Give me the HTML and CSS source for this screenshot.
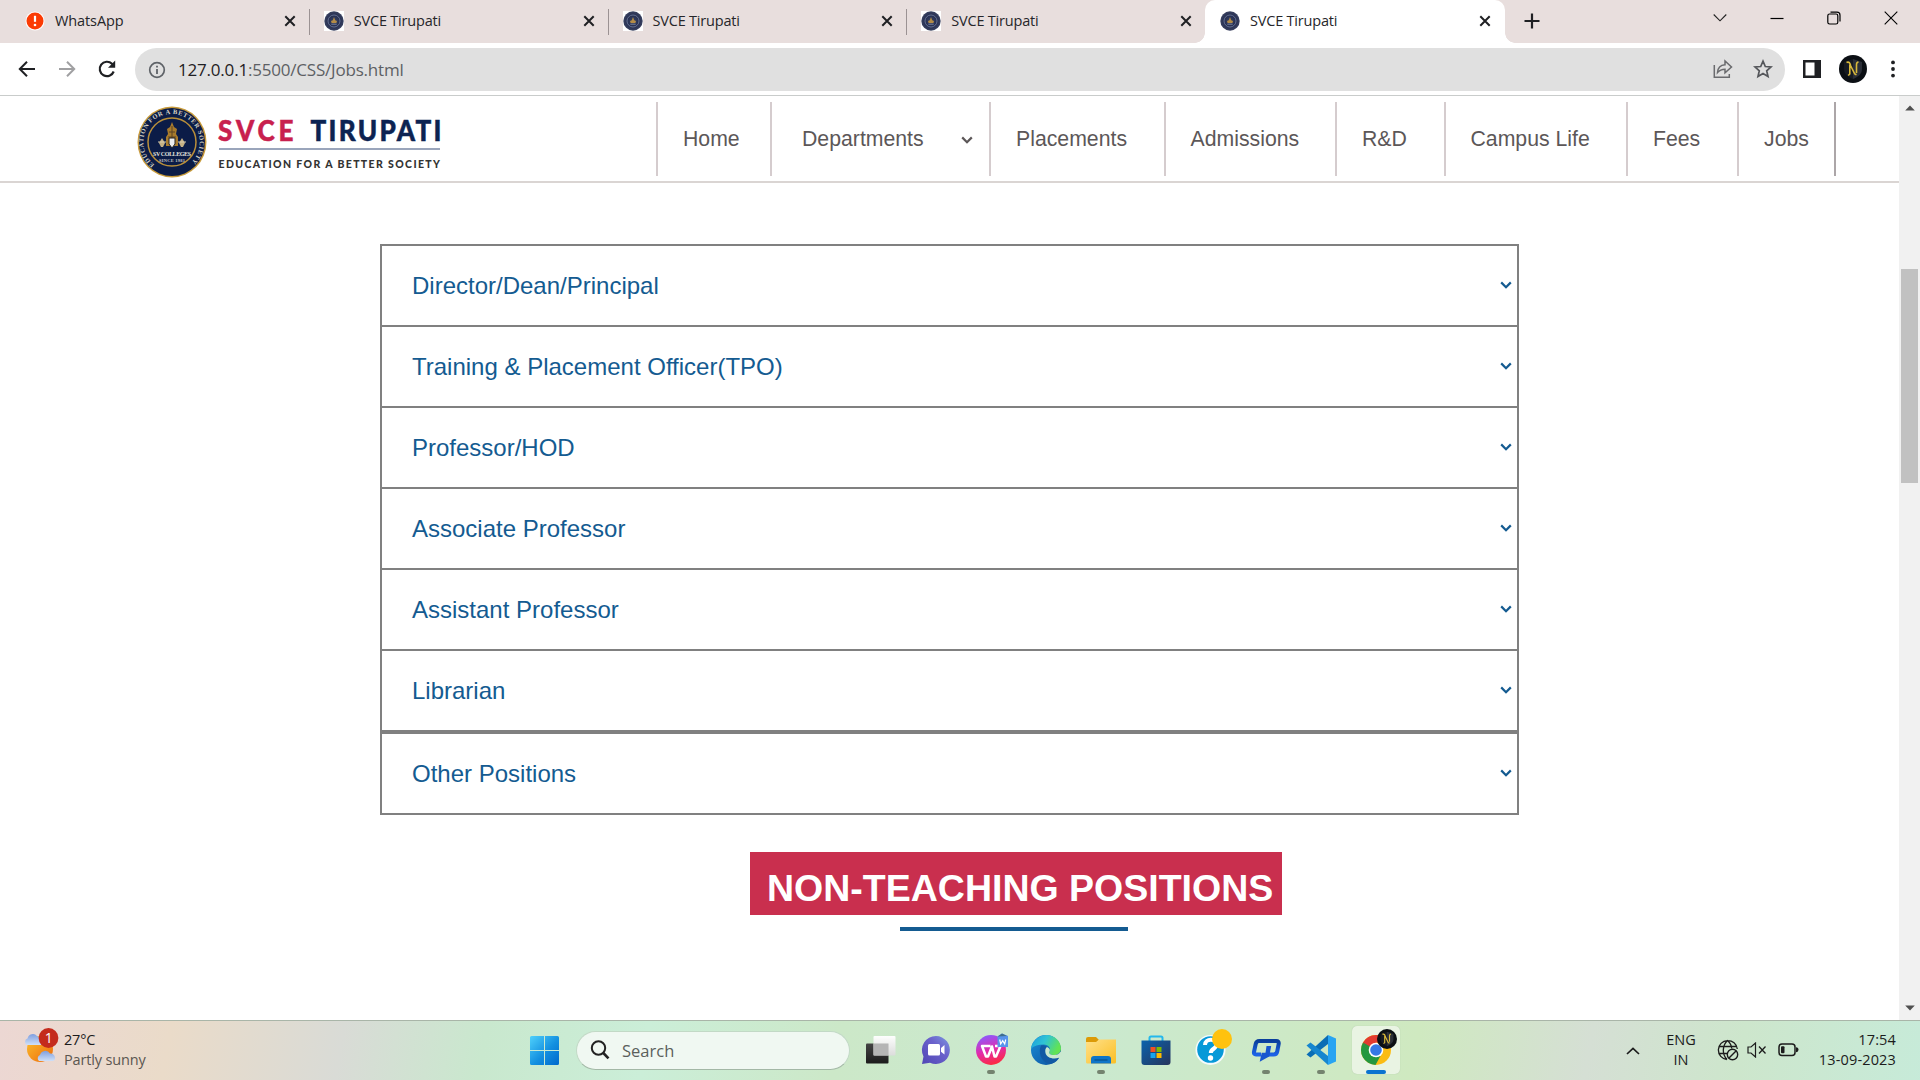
FILE: index.html
```html
<!DOCTYPE html>
<html lang="en">
<head>
<meta charset="utf-8">
<title>SVCE Tirupati</title>
<link rel="stylesheet" href="styles.css">
</head>
<body>
<svg class="defs" width="0" height="0" aria-hidden="true">
  <defs>
    <radialGradient id="fav"><stop offset="0" stop-color="#3a4360"/><stop offset=".6" stop-color="#252e52"/><stop offset="1" stop-color="#39415f"/></radialGradient>
    <linearGradient id="win" x1="0" y1="0" x2="1" y2="1"><stop offset="0" stop-color="#4fd0fb"/><stop offset=".55" stop-color="#1390e0"/><stop offset="1" stop-color="#0069cc"/></linearGradient>
    <linearGradient id="sun" x1="0" y1="0" x2="1" y2="1"><stop offset="0" stop-color="#fbc02d"/><stop offset="1" stop-color="#ee6a0c"/></linearGradient>
    <linearGradient id="cloud" x1="0" y1="0" x2="0" y2="1"><stop offset="0" stop-color="#7f9fe0"/><stop offset="1" stop-color="#cfe0f8"/></linearGradient>
    <linearGradient id="tvd" x1="0" y1="0" x2="0" y2="1"><stop offset="0" stop-color="#444"/><stop offset="1" stop-color="#1c1c1c"/></linearGradient>
    <linearGradient id="tvl" x1="0" y1="0" x2="0" y2="1"><stop offset="0" stop-color="#fff"/><stop offset="1" stop-color="#dcdcdc"/></linearGradient>
    <linearGradient id="chat" x1="0" y1="1" x2="1" y2="0"><stop offset="0" stop-color="#5046b5"/><stop offset=".6" stop-color="#6b62cc"/><stop offset="1" stop-color="#7d9ae0"/></linearGradient>
    <linearGradient id="wps" x1=".3" y1="0" x2=".6" y2="1"><stop offset="0" stop-color="#8a5cff"/><stop offset=".5" stop-color="#e02cae"/><stop offset="1" stop-color="#ff2a3c"/></linearGradient>
    <linearGradient id="edgeTop" x1="0" y1="0" x2="1" y2=".4"><stop offset="0" stop-color="#1b9ade"/><stop offset=".5" stop-color="#2fc3d5"/><stop offset="1" stop-color="#62e354"/></linearGradient>
    <linearGradient id="edgeLow" x1="0" y1="0" x2="1" y2="1"><stop offset="0" stop-color="#1a8fd8"/><stop offset="1" stop-color="#0c4f9c"/></linearGradient>
    <linearGradient id="folder" x1="0" y1="0" x2="1" y2="1"><stop offset="0" stop-color="#ffe08a"/><stop offset="1" stop-color="#fbbf24"/></linearGradient>
    <linearGradient id="store" x1="0" y1="0" x2="1" y2="1"><stop offset="0" stop-color="#0a63ad"/><stop offset="1" stop-color="#27355c"/></linearGradient>
    <linearGradient id="qb" x1="0" y1="0" x2="0" y2="1"><stop offset="0" stop-color="#0a3f9c"/><stop offset="1" stop-color="#1c62e6"/></linearGradient>
    <symbol id="crest" viewBox="0 0 20 20">
      <circle cx="10" cy="10" r="9.7" fill="url(#fav)"/>
      <circle cx="10" cy="10" r="6" fill="none" stroke="#7480a0" stroke-width=".8"/>
      <path d="M10 6l1.200 3.200L13 10l-.6 2H7.600L7 10l1.800-.8z" fill="#b48c46"/>
      <path d="M7.300 13.200h5.400" stroke="#9aa3bb" stroke-width=".7"/>
    </symbol>
    <symbol id="x" viewBox="0 0 12 12"><path d="M1.300 1.300l9.400 9.400M10.700 1.300l-9.400 9.400" stroke="#1f2023" stroke-width="2" fill="none"/></symbol>
    <symbol id="chev" viewBox="0 0 12 8"><path d="M1.200 1.400L6 6.200l4.800-4.800" stroke="currentColor" stroke-width="2.200" fill="none"/></symbol>
    <symbol id="avatar" viewBox="0 0 28 28">
      <circle cx="14" cy="14" r="14" fill="#0b0f14"/>
      <path d="M14 4l9 3v7c0 5-4 8-9 10z" fill="#2b2f38"/><path d="M14 4L5 7v7c0 5 4 8 9 10z" fill="#171b22"/>
      <path d="M7.500 7.500c2.500-1.200 3.500.5 4.300 3.500l3.200 6.500c.8 1.800 1.500 2.200 2.500 1.700M10.800 9.500v9.500l-1.600 1.500M17.500 18V9.500c0-1.500.8-2.300 2-2.500" fill="none" stroke="#d9b93a" stroke-width="1.600"/>
    </symbol>
  </defs>
</svg>

<header class="tabstrip">
  <div class="tab first">
    <svg class="fav warn" viewBox="0 0 20 20"><circle cx="10" cy="10" r="9.500" fill="#fff"/><circle cx="10" cy="10" r="8.500" fill="#fb3b04"/><path d="M10 4.800v6" stroke="#fff" stroke-width="2.200"/><circle cx="10" cy="14" r="1.300" fill="#fff"/></svg>
    <span class="tab-title wa">WhatsApp</span><svg class="close"><use href="#x"/></svg>
  </div>
  <div class="tab"><span class="fav plate"><svg><use href="#crest"/></svg></span><span class="tab-title">SVCE Tirupati</span><svg class="close"><use href="#x"/></svg></div>
  <div class="tab"><span class="fav plate"><svg><use href="#crest"/></svg></span><span class="tab-title">SVCE Tirupati</span><svg class="close"><use href="#x"/></svg></div>
  <div class="tab last"><span class="fav plate"><svg><use href="#crest"/></svg></span><span class="tab-title">SVCE Tirupati</span><svg class="close"><use href="#x"/></svg></div>
  <div class="tab active"><span class="fav"><svg><use href="#crest"/></svg></span><span class="tab-title">SVCE Tirupati</span><svg class="close"><use href="#x"/></svg></div>
  <svg class="plus" viewBox="0 0 16 16"><path d="M8 .5v15M.5 8h15" stroke="#1f2023" stroke-width="2.200"/></svg>
  <div class="window-buttons">
    <svg viewBox="0 0 14 14"><path d="M.7 3.500L7 9.800l6.300-6.300" fill="none" stroke="#222" stroke-width="1.100"/></svg>
    <svg viewBox="0 0 14 14"><path d="M.5 7.500h13" stroke="#000" stroke-width="1.200"/></svg>
    <svg viewBox="0 0 14 14"><rect x=".8" y="3" width="10" height="10" rx="1.800" fill="none" stroke="#000" stroke-width="1.200"/><path d="M3.500 1.200h6.500a3 3 0 0 1 3 3v6.300" fill="none" stroke="#000" stroke-width="1.200"/></svg>
    <svg viewBox="0 0 14 14"><path d="M.7.7l12.600 12.600M13.300.7L.7 13.300" stroke="#000" stroke-width="1.100"/></svg>
  </div>
</header>

<div class="toolbar">
  <svg class="nav-ic" viewBox="0 0 20 20"><path d="M18 10H3.200M10 2.800L2.800 10l7.200 7.200" fill="none" stroke="#1f2023" stroke-width="2"/></svg>
  <svg class="nav-ic" viewBox="0 0 20 20"><path d="M2 10h14.800M10 2.800l7.200 7.200-7.200 7.200" fill="none" stroke="#a0a0a2" stroke-width="2"/></svg>
  <svg class="nav-ic" viewBox="0 0 20 20"><path d="M16.700 12.500A7.200 7.200 0 1 1 15 4.800l1.500 1.500" fill="none" stroke="#1f2023" stroke-width="2.200"/><path d="M18.200 1.500v7.200H11z" fill="#1f2023"/></svg>
  <div class="address">
    <svg class="info" viewBox="0 0 18 18"><circle cx="9" cy="9" r="7.300" fill="none" stroke="#5f6368" stroke-width="1.700"/><path d="M9 8v5M9 4.800v1.800" stroke="#5f6368" stroke-width="1.800"/></svg>
    <span class="url"><b>127.0.0.1</b>:5500/CSS/Jobs.html</span>
    <svg class="share" viewBox="0 0 20 20"><path d="M1.300 6v12.300h15V15" fill="none" stroke="#6a6b6e" stroke-width="1.500"/><path d="M4.500 13.500c.3-4.500 3-7.500 7.500-7.800V2l6.500 6-6.500 5.800v-3.600c-3.200 0-5.500 1-7.500 3.300z" fill="none" stroke="#6a6b6e" stroke-width="1.500"/></svg>
    <svg class="star" viewBox="0 0 20 20"><path d="M10 2.200l2.300 5.300 5.700.5-4.300 3.800 1.300 5.600-5-3-5 3 1.300-5.600L2 8l5.700-.5z" fill="none" stroke="#55575b" stroke-width="1.700"/></svg>
  </div>
  <svg class="panel" viewBox="0 0 18 18"><path d="M0 0h18v18H0zM2.500 2.500v13h9v-13z" fill="#1f2023" fill-rule="evenodd"/></svg>
  <svg class="avatar"><use href="#avatar"/></svg>
  <svg class="dots" viewBox="0 0 4 18"><circle cx="2" cy="2.400" r="1.900"/><circle cx="2" cy="9" r="1.900"/><circle cx="2" cy="15.600" r="1.900"/></svg>
</div>

<div class="viewport">
  <main class="page">
    <div class="site-header">
      <svg class="logo" viewBox="0 0 304 72" role="img">
        <defs><path id="ring" d="M17.500 58.500A28.200 28.200 0 1 1 54.500 56"/></defs>
        <ellipse cx="35" cy="36" rx="34.500" ry="35.500" fill="#c79a3a"/>
        <ellipse cx="35" cy="36" rx="33" ry="34" fill="#0b1c47"/>
        <circle cx="35" cy="36" r="24" fill="#0b1c47" stroke="#b98f3a" stroke-width="1.500"/>
        <text class="ring-text"><textPath href="#ring" textLength="136">EDUCATION FOR A BETTER SOCIETY</textPath></text>
        <path d="M35 16l2 5 3 2-1 5 2 3v9H29v-9l2-3-1-5 3-2z" fill="#a87b2c"/>
        <path d="M35 20v18M32 26h6M31 31h8" stroke="#5b4424" stroke-width="1"/>
        <path d="M22 37l3-5 3 5-2 4h-2zM42 37l3-5 3 5-2 4h-2z" fill="#c5b184"/>
        <path d="M21 36h8M41 36h8" stroke="#d9cdb0" stroke-width="1"/>
        <path d="M32 32h6v6l-3 4-3-4z" fill="#eee" stroke="#222" stroke-width="1"/>
        <text class="crest-text" x="35" y="49.500" textLength="38">SV COLLEGES</text>
        <text class="crest-sub" x="35" y="56" textLength="26">SINCE 1981</text>
        <text class="brand red" transform="translate(81 34.500) scale(.9 1)" textLength="84">SVCE</text>
        <text class="brand blue" transform="translate(173.500 34.500) scale(.9 1)" textLength="145.500">TIRUPATI</text>
        <rect x="82" y="42" width="221" height="2" fill="#9aa5bb"/>
        <text class="tagline" x="81.500" y="61.500" textLength="221.500">EDUCATION FOR A BETTER SOCIETY</text>
      </svg>
      <nav class="menu">
        <a class="home">Home</a>
        <a class="dept">Departments<svg><use href="#chev"/></svg></a>
        <a class="plac">Placements</a>
        <a class="admi">Admissions</a>
        <a class="rnd">R&amp;D</a>
        <a class="camp">Campus Life</a>
        <a class="fees">Fees</a>
        <a class="jobs">Jobs</a>
      </nav>
    </div>
    <section class="accordion">
      <div class="row">Director/Dean/Principal<svg><use href="#chev"/></svg></div>
      <div class="row">Training &amp; Placement Officer(TPO)<svg><use href="#chev"/></svg></div>
      <div class="row">Professor/HOD<svg><use href="#chev"/></svg></div>
      <div class="row">Associate Professor<svg><use href="#chev"/></svg></div>
      <div class="row">Assistant Professor<svg><use href="#chev"/></svg></div>
      <div class="row">Librarian<svg><use href="#chev"/></svg></div>
      <div class="row other">Other Positions<svg><use href="#chev"/></svg></div>
    </section>
    <h1 class="banner">NON-TEACHING POSITIONS</h1>
    <div class="rule"></div>
  </main>
  <div class="scrollbar">
    <svg viewBox="0 0 10 6"><path d="M5 .5L9.800 5.500H.2z"/></svg>
    <div class="thumb"></div>
    <svg class="down" viewBox="0 0 10 6"><path d="M5 5.500L9.800.5H.2z"/></svg>
  </div>
</div>

<footer class="taskbar">
  <div class="weather">
    <svg viewBox="0 0 36 36">
      <circle cx="16" cy="21" r="13" fill="url(#sun)"/>
      <path d="M3 17a3.500 3.500 0 0 1 .5-6.500A5.500 5.500 0 0 1 13 8c3 1 5 4 4 9z" fill="url(#cloud)"/>
      <path d="M15 33a3.500 3.500 0 0 1 1-6 5.500 5.500 0 0 1 10-1.500c3 0 5.500 2 5 5.500-.3 1.300-1.200 2-2.500 2z" fill="url(#cloud)"/>
      <circle cx="24.500" cy="10" r="9.900" fill="#c42b1c"/>
      <text x="24.700" y="15" class="badge-num">1</text>
    </svg>
    <div class="two-line"><span class="temp">27°C</span><span class="cond">Partly sunny</span></div>
  </div>
  <div class="apps">
    <svg class="start" viewBox="0 0 29 29"><path d="M1.500 0H14v14H0V1.500Q0 0 1.500 0zM15 0h12.500Q29 0 29 1.500V14H15zM0 15h14v14H1.500Q0 29 0 27.500zM15 15h14v12.500q0 1.500-1.500 1.500H15z" fill="url(#win)"/></svg>
    <div class="search"><svg viewBox="0 0 20 20"><circle cx="8.500" cy="8" r="6.700" fill="none" stroke="#222" stroke-width="2"/><path d="M13.300 13l5.200 5.300" stroke="#222" stroke-width="2.600"/></svg><span>Search</span></div>
    <div class="app"><svg viewBox="0 0 32 32"><rect x="1" y="9.500" width="22.500" height="20" rx="1" fill="url(#tvd)"/><rect x="8.500" y="2" width="22" height="19.500" rx="1" fill="url(#tvl)" opacity=".97"/><path d="M8.500 9.500h15v12h-15z" fill="#b5b5b5"/></svg></div>
    <div class="app"><svg viewBox="0 0 32 32"><path d="M16 2a14 14 0 1 1-6 26.700L2 30l1.500-7.500A14 14 0 0 1 16 2z" fill="url(#chat)"/><rect x="8" y="10" width="12" height="11.500" rx="1.500" fill="#fff"/><path d="M21 14l3.500-3v9.500L21 17.800z" fill="#fff"/></svg></div>
    <div class="app run"><svg viewBox="0 0 32 32"><circle cx="16" cy="16" r="15" fill="url(#wps)"/><path d="M15.500 12H7l4 10.500h2L17 12.500l2.500 10h1.500L25.500 12H20" fill="none" stroke="#fff" stroke-width="2.500" stroke-linejoin="round"/><path d="M22.500 2.500L27-.5 33 2v11H22.500z" fill="#5794ec"/><path d="M22.500 2.500L27-.5l5 2.500z" fill="#3f6f8c"/><path d="M24.700 5.500l1 4.500 2-3.300 2 3.300 1-4.500" fill="none" stroke="#fff" stroke-width="1.200"/></svg></div>
    <div class="app"><svg viewBox="0 0 32 32"><circle cx="16" cy="16" r="15" fill="url(#edgeLow)"/><path d="M1 14.500C2.500 6.500 9 1 16.500 1 25 1 31 7.500 31 14.500c0 4-3 6.500-7 6.500-3.500 0-5.500-1.500-4.500-3.500 1.500-3-.5-7-6-7-5 0-9.500 1.500-12.500 4z" fill="url(#edgeTop)"/><path d="M11 11.500c-3 6-.5 17 9 18.500 5-1 8-4 9-6.300-5 2.300-12 .3-13.500-4.700-.8-3 0-5 1.500-6-1.500-1.600-4-2-6-1.500z" fill="#1259a4"/><path d="M19.500 17.500c-1 2 1 3.500 4.500 3.500 3.200 0 5.500-1 6.500-3.500l2 4-3.500 2.200c-6 2-12.500 0-13.500-4.700-.6-3 0-5 1.500-6 2.500 1 3.500 3 2.500 4.500z" fill="#cbe8ce"/></svg></div>
    <div class="app run"><svg viewBox="0 0 32 32"><path d="M1 5q0-2 2-2h8l3 3-3 3H1z" fill="#dc9a07"/><path d="M1 8h10l3-2.500h17V28q0 1.500-1.500 1.500h-27Q1 29.500 1 28z" fill="url(#folder)"/><path d="M6 29.500V25q0-3 3-3h14q3 0 3 3v4.500z" fill="#0f75c8"/><path d="M9.500 26h13" stroke="#07528f" stroke-width="1.300"/></svg></div>
    <div class="app"><svg viewBox="0 0 32 32"><path d="M9.500 7V4q0-1.500 1.500-1.500h10q1.500 0 1.500 1.500v3" fill="none" stroke="#24b8ec" stroke-width="2"/><path d="M1.500 6.500h29V28q0 3-3 3h-23q-3 0-3-3z" fill="url(#store)"/><path d="M10.500 13h5v5h-5z" fill="#f25022"/><path d="M16.500 13h5v5h-5z" fill="#7fba00"/><path d="M10.500 19h5v5h-5z" fill="#17a4ee"/><path d="M16.500 19h5v5h-5z" fill="#ffb900"/></svg></div>
    <div class="app"><svg viewBox="0 0 32 32"><circle cx="15.500" cy="16" r="15" fill="#f5fbfd"/><circle cx="15.500" cy="15.500" r="13.300" fill="#0699d8"/><path d="M10 11c0-7 11.500-7 11.500-.5 0 4.500-5.700 4-5.700 8.500" fill="none" stroke="#fff" stroke-width="4"/><circle cx="15.500" cy="24" r="2.700" fill="#fff"/><circle cx="27" cy="5" r="10" fill="#ffc20e"/></svg></div>
    <div class="app run"><svg viewBox="0 0 32 32"><path d="M11 20.500H6q-2.500 0-2-2.500l1.700-8q.7-3 3.500-3h17q3 0 2.500 3l-1.500 7.500q-.6 3-3.600 3h-5.500" fill="none" stroke="url(#qb)" stroke-width="4"/><path d="M16.500 12h4.700l-2 10.500-9.500 5.300 2-9h3.800z" fill="#1857cf"/></svg></div>
    <div class="app run"><svg viewBox="0 0 32 32"><path d="M23 1L31 4.500v23L23 31z" fill="#28a4f2"/><path d="M23 1v9L5.500 23.500 1.500 20.500z" fill="#0a6db5"/><path d="M23 31v-9L5.500 8.500l-4 3z" fill="#1686cf"/></svg></div>
    <div class="app current"><svg viewBox="0 0 32 32"><circle cx="16" cy="16" r="15" fill="#fbbc14"/><path d="M3 8.500A15 15 0 0 0 15.500 31l6-11L16 16z" fill="#23973f"/><path d="M3 8.500A15 15 0 0 1 29 8.500H16L9.500 19z" fill="#e23b30"/><path d="M3 8.500L9.500 20 16 16z" fill="#23973f"/><circle cx="16" cy="16" r="7.300" fill="#fff"/><circle cx="16" cy="16" r="5.800" fill="#3478e5"/></svg><svg class="mini"><use href="#avatar"/></svg></div>
  </div>
  <div class="tray">
    <svg class="caret" viewBox="0 0 14 8"><path d="M1 7l6-5.700L13 7" fill="none" stroke="#1c1c1c" stroke-width="1.700"/></svg>
    <div class="two-line lang"><span>ENG</span><span class="in">IN</span></div>
    <svg class="globe" viewBox="0 0 22 22"><path d="M10 20.500A9.500 9.500 0 1 1 20.300 10M10 20.500c-5-5-5-14 .5-19 2.800 2.500 4 5 4.200 8M2 7.500h17M2 14.500h8" fill="none" stroke="#1c1c1c" stroke-width="1.300"/><circle cx="15.500" cy="15.500" r="5.200" fill="none" stroke="#1c1c1c" stroke-width="1.400"/><path d="M12 19l7-7" stroke="#1c1c1c" stroke-width="1.400"/></svg>
    <svg class="speaker" viewBox="0 0 20 16"><path d="M1 5h3l4.500-4v14L4 11H1z" fill="none" stroke="#1c1c1c" stroke-width="1.200"/><path d="M12 4.500l6.500 7M18.500 4.500l-6.500 7" stroke="#1c1c1c" stroke-width="1.300"/></svg>
    <svg class="battery" viewBox="0 0 21 14"><rect x="1" y="1" width="16" height="11.500" rx="3" fill="none" stroke="#1c1c1c" stroke-width="1.500"/><rect x="3" y="3.300" width="3.500" height="7" rx="1" fill="#1c1c1c"/><path d="M18 4.300q2.500 0 2.500 2.500T18 9.200z" fill="#1c1c1c"/></svg>
    <div class="two-line clock"><span>17:54</span><span>13-09-2023</span></div>
  </div>
</footer>
</body>
</html>
```

FILE: styles.css
```css
* { box-sizing: border-box; }
body {
  margin: 0;
  width: 1920px;
  height: 1080px;
  overflow: hidden;
  display: flex;
  flex-direction: column;
  background: #fff;
  font-family: "Open Sans", "Noto Sans", sans-serif;
}
svg { display: block; flex: none; }
.defs { position: absolute; }

/* tab strip */
.tabstrip {
  height: 43px;
  display: flex;
  align-items: center;
  background: #e8dedd;
  padding-left: 11px;
}
.tab {
  flex: none;
  width: 298.75px;
  height: 26px;
  display: flex;
  align-items: center;
  padding-left: 14px;
  border-right: 1px solid #9b9293;
}
.tab.last { border-right-color: transparent; }
.fav { width: 20px; height: 20px; margin: -1px 10px 0 0; flex: none; }
.fav svg { width: 20px; height: 20px; }
.plate { background: #fff; }
.tab-title { font-size: 14.5px; line-height: 20px; color: #26262a; letter-spacing: -.2px; flex: 1; padding-bottom: 2px; }
.tab-title.wa { letter-spacing: -.1px; }
.close { width: 12px; height: 12px; margin: -1px 13px 0 0; }
.tab.active {
  height: 43px;
  width: 300px;
  margin-left: -1px;
  padding-left: 15px;
  background: #fff;
  border: 0;
  border-radius: 10px 10px 0 0;
  position: relative;
}
.tab.active .close { margin-right: 14px; }
.tab.active::before, .tab.active::after {
  content: "";
  position: absolute;
  bottom: 0;
  width: 10px;
  height: 10px;
}
.tab.active::before { left: -10px; background: radial-gradient(circle at 0 0, transparent 9.5px, #fff 10px); }
.tab.active::after { right: -10px; background: radial-gradient(circle at 100% 0, transparent 9.5px, #fff 10px); }
.plus { width: 16px; height: 16px; margin: -1px 0 0 19px; }
.window-buttons { margin: 0 22px 7px auto; display: flex; gap: 43px; }
.window-buttons svg { width: 14px; height: 14px; }

/* toolbar */
.toolbar {
  height: 53px;
  display: flex;
  align-items: center;
  padding: 0 25px 0 17px;
  border-bottom: 1px solid #c9cccb;
}
.nav-ic { width: 20px; height: 20px; margin-right: 20px; }
.nav-ic:nth-child(3) { margin-right: 18px; }
.address {
  width: 1650px;
  height: 43px;
  border-radius: 22px;
  background: #e0e0e0;
  display: flex;
  align-items: center;
  padding: 0 12px 0 13px;
}
.info { width: 18px; height: 18px; margin: 1px 12px 0 0; }
.url { flex: 1; font-size: 17px; line-height: 24px; color: #5d6064; letter-spacing: -.2px; padding-top: 1px; }
.url b { font-weight: 400; color: #1f2023; }
.share { width: 20px; height: 20px; margin-right: 20px; }
.star { width: 20px; height: 20px; }
.panel { width: 18px; height: 18px; margin-left: 18px; }
.avatar { width: 28px; height: 28px; margin-left: 18px; }
.dots { width: 4px; height: 18px; margin-left: auto; fill: #1f2023; }

/* page */
.viewport { height: 924px; display: flex; }
.page { width: 1899px; font-family: "Liberation Sans", Arial, sans-serif; }
.site-header {
  height: 87px;
  border-bottom: 2px solid #dad5d3;
  display: flex;
  padding: 6px 0 0 137px;
}
.logo { width: 304px; height: 72px; margin-top: 4px; }
.ring-text { font: 700 6.5px "Liberation Serif", serif; fill: #d8d3c4; }
.crest-text { font: 700 6px "Liberation Serif", serif; fill: #e4e2dc; text-anchor: middle; }
.crest-sub { font: 700 4.5px "Liberation Serif", serif; fill: #c9c7c4; text-anchor: middle; }
.brand { font: 900 29px Lato, sans-serif; stroke-width: .5px; }
.red { fill: #c8204e; stroke: #c8204e; }
.blue { fill: #0c2352; stroke: #0c2352; }
.tagline { font: 900 10.5px Lato, sans-serif; fill: #333; }
.menu { margin-left: 215px; height: 74px; display: flex; }
.menu a {
  display: flex;
  align-items: center;
  padding-left: 25px;
  border-left: 2px solid #d5ccce;
  font-size: 21.25px;
  color: #5c5758;
  white-space: nowrap;
}
.menu .home { width: 114px; }
.menu .dept { width: 219px; padding-left: 30px; }
.menu svg { width: 12px; height: 8px; margin-left: 37px; margin-top: 1px; }
.menu .plac { width: 175px; }
.menu .admi { width: 171px; padding-left: 24.5px; }
.menu .rnd { width: 109px; }
.menu .camp { width: 182px; padding-left: 24.5px; }
.menu .fees { width: 111px; }
.menu .jobs { width: 99px; border-right: 2px solid #aca6a8; }

.accordion { width: 1139px; margin: 61px 0 0 380px; color: #145b91; }
.row {
  height: 81px;
  border: 2px solid #808080;
  border-bottom: 0;
  display: flex;
  align-items: center;
  justify-content: space-between;
  padding: 0 5px 0 30px;
  font-size: 24px;
}
.row:nth-child(6) { height: 83px; border-bottom: 2px solid #808080; }
.row svg { width: 12px; height: 8px; margin-top: -1px; }
.other { height: 83px; border-bottom: 2px solid #808080; }
.banner {
  margin: 37px 0 0 750px;
  width: 532px;
  height: 63px;
  padding: 9px 0 0 17px;
  line-height: 54px;
  background: #c92f4e;
  color: #fff;
  font-size: 37.5px;
  font-weight: 700;
  white-space: nowrap;
}
.rule { width: 228px; height: 4px; margin: 12px 0 0 900px; background: #145b91; }

.scrollbar {
  width: 21px;
  background: #f1f1f1;
  display: flex;
  flex-direction: column;
  align-items: center;
  padding: 9px 0;
}
.scrollbar svg { width: 10px; height: 6px; fill: #505050; }
.thumb { width: 17px; height: 214px; margin-top: 158px; background: #c1c1c1; }
.scrollbar .down { margin-top: auto; }

/* taskbar */
.taskbar {
  height: 60px;
  border-top: 1px solid #a9b5a8;
  display: flex;
  align-items: center;
  background: linear-gradient(100deg, #ecd7d3 0, #eadbc9 170px, #d9dbd6 340px, #c9e8ce 480px, #cbeed8 640px, #cce8c8 830px, #cae9d0 1050px, #cfe9c0 1400px, #d5dfd4 1570px, #cde6cc 1720px, #c6ebda 1920px);
}
.weather { width: 530px; display: flex; align-items: center; padding-left: 24px; }
.weather > svg { width: 36px; height: 36px; margin: -9px 4px 0 0; }
.badge-num { font: 14px "Open Sans", sans-serif; fill: #fff; text-anchor: middle; }
.two-line { display: flex; flex-direction: column; font-size: 14.5px; line-height: 20px; color: #1c1c1c; margin-top: -2px; }
.temp { letter-spacing: -.2px; }
.cond { color: #5b5651; letter-spacing: -.15px; }
.apps { width: 872px; display: flex; align-items: center; margin-top: -1px; }
.start { width: 29px; height: 29px; }
.search {
  width: 274px;
  height: 39px;
  margin: 0 7px 0 17px;
  border-radius: 20px;
  background: #f0f8f2;
  border: 1px solid #c2d9c6;
  border-bottom-color: #a3b8a6;
  display: flex;
  align-items: center;
  padding-left: 13px;
  font-size: 16.5px;
  color: #5b605c;
}
.search svg { width: 20px; height: 20px; margin-right: 12px; }
.app {
  flex: none;
  width: 48px;
  height: 48px;
  margin-right: 7px;
  display: flex;
  align-items: center;
  justify-content: center;
  position: relative;
}
.app svg { width: 32px; height: 32px; overflow: visible; }
.run::after, .current::after {
  content: "";
  position: absolute;
  bottom: 0;
  left: 20px;
  width: 8px;
  height: 4px;
  border-radius: 2px;
  background: #74836f;
}
.current { background: #e9f4e3; border-radius: 5px; box-shadow: 0 0 1px #a9bda2; margin-right: 0; }
.current::after { left: 14px; width: 20px; background: #0a74d0; }
.app .mini { position: absolute; width: 20px; height: 20px; left: 25px; top: 3px; }
.tray { flex: 1; display: flex; align-items: center; padding-right: 24px; }
.caret { width: 14px; height: 8px; margin-left: 224px; }
.lang { width: 40px; margin-left: 21px; align-items: center; }
.globe { width: 22px; height: 22px; margin: -1px 0 0 16px; }
.speaker { width: 20px; height: 16px; margin: -1px 0 0 8px; }
.battery { width: 21px; height: 14px; margin: -1px 0 0 11px; }
.clock { margin-left: auto; align-items: flex-end; letter-spacing: .15px; }
```
